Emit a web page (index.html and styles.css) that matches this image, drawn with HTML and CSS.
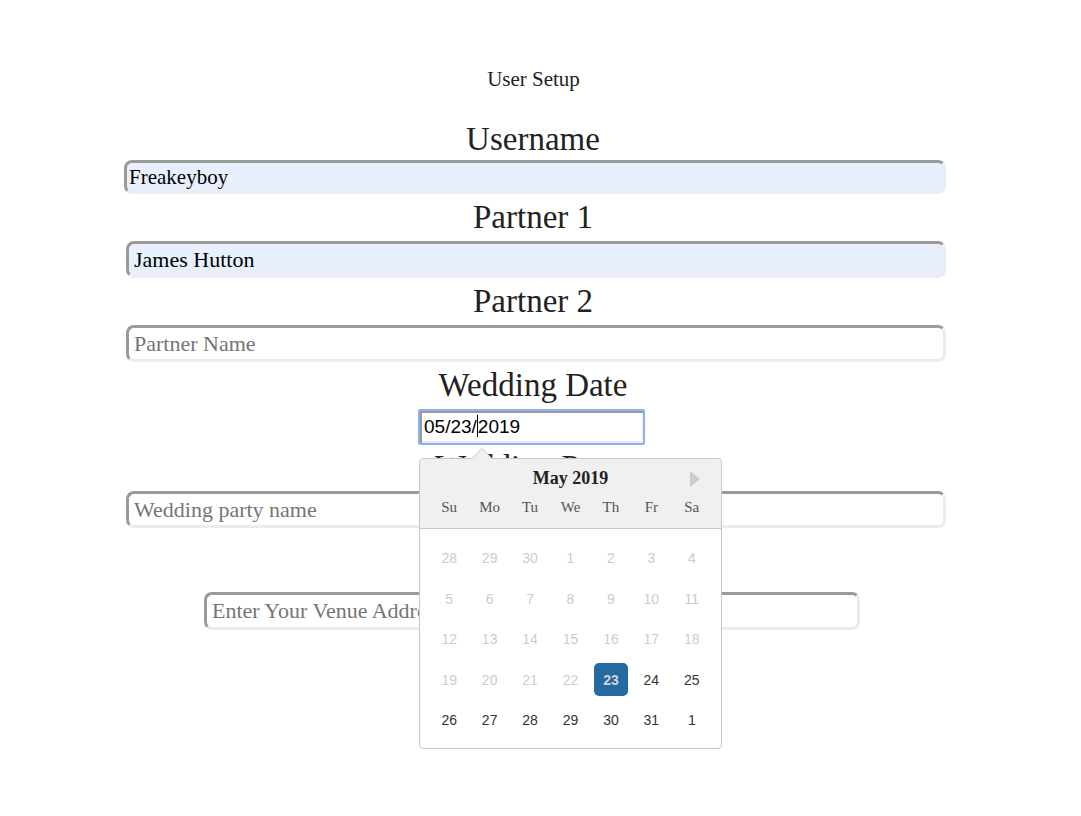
FILE: index.html
```html
<!DOCTYPE html>
<html lang="en">
<head>
<meta charset="utf-8">
<title>User Setup</title>
<link rel="stylesheet" href="styles.css">
</head>
<body>
<main class="setup">
  <h1 class="title">User Setup</h1>
  <form class="form">
    <label class="label label-first" for="username">Username</label>
    <input class="field field-user field-filled" id="username" type="text" value="Freakeyboy">

    <label class="label" for="p1">Partner 1</label>
    <input class="field field-filled" id="p1" type="text" value="James Hutton">

    <label class="label" for="p2">Partner 2</label>
    <input class="field" id="p2" type="text" placeholder="Partner Name">

    <label class="label" for="date">Wedding Date</label>
    <div class="date-wrap">
      <div class="date-field" id="date" role="textbox">05/23/<span class="caret"></span>2019</div>
      <div class="picker">
        <div class="picker-arrow"></div>
        <div class="picker-head">
          <div class="picker-title">May 2019<span class="picker-next"></span></div>
          <div class="picker-dow">
            <span>Su</span><span>Mo</span><span>Tu</span><span>We</span><span>Th</span><span>Fr</span><span>Sa</span>
          </div>
        </div>
        <div class="picker-days">
          <span class="off">28</span><span class="off">29</span><span class="off">30</span><span class="off">1</span><span class="off">2</span><span class="off">3</span><span class="off">4</span>
          <span class="off">5</span><span class="off">6</span><span class="off">7</span><span class="off">8</span><span class="off">9</span><span class="off">10</span><span class="off">11</span>
          <span class="off">12</span><span class="off">13</span><span class="off">14</span><span class="off">15</span><span class="off">16</span><span class="off">17</span><span class="off">18</span>
          <span class="off">19</span><span class="off">20</span><span class="off">21</span><span class="off">22</span><span class="sel"><b>23</b></span><span>24</span><span>25</span>
          <span>26</span><span>27</span><span>28</span><span>29</span><span>30</span><span>31</span><span>1</span>
        </div>
      </div>
    </div>

    <label class="label label-hidden" for="party">Wedding Party</label>
    <input class="field" id="party" type="text" placeholder="Wedding party name">

    <input class="field field-venue" id="venue" type="text" placeholder="Enter Your Venue Address">
  </form>
</main>
</body>
</html>
```

FILE: styles.css
```css
* { box-sizing: border-box; }

html, body {
  margin: 0;
  background: #ffffff;
}

body {
  font-family: "Liberation Serif", "Times New Roman", serif;
  color: #222222;
}

.setup {
  padding-top: 67px;
  padding-bottom: 170px;
  min-height: 816px;
}

.title {
  margin: 0;
  font-size: 21px;
  font-weight: normal;
  line-height: 24px;
  text-align: center;
  padding-right: 14px;
}

.form {
  width: 822px;
  margin: 0 0 0 124px;
  display: flex;
  flex-direction: column;
}

.label {
  display: block;
  font-size: 33px;
  line-height: 38px;
  margin: 4px 0 5px;
  text-align: center;
  padding-right: 4px;
}

.label-first {
  margin: 29px 0 2px;
}

.label-hidden {
  position: relative;
  z-index: 1;
  margin-top: 3px;
}

.field {
  display: block;
  font-family: "Liberation Serif", "Times New Roman", serif;
  font-size: 22px;
  line-height: 25px;
  color: #000000;
  background: #ffffff;
  border-style: solid;
  border-width: 3px 3px 3px 3px;
  border-color: #9a9a9a #ececec #ececec #9a9a9a;
  border-radius: 8px;
  padding: 3px 5px;
  margin-left: 2px;
  width: 820px;
  height: 37px;
  outline: none;
}

.field::placeholder {
  color: #757575;
}

.field-filled {
  background: #e8f0fe;
}

.field-user {
  margin-left: 0;
  width: 822px;
  height: 34px;
  font-size: 21px;
  padding: 1px 2px;
}

.date-wrap {
  position: relative;
  margin-left: 294px;
  width: 227px;
  z-index: 5;
}

.date-field {
  height: 36px;
  width: 227px;
  border: 2px solid #8cb2f5;
  border-radius: 2px;
  box-shadow: inset 2px 2px 0 #9a9a9a, inset -1px -2px 0 #ececec;
  font-family: "Liberation Sans", Arial, sans-serif;
  font-size: 19px;
  line-height: 32px;
  padding: 0 4px;
  color: #000000;
  background: #ffffff;
}

.caret {
  display: inline-block;
  width: 1px;
  height: 22px;
  background: #000000;
  vertical-align: -4px;
}

.picker {
  position: absolute;
  top: 49px;
  left: 1px;
  width: 303px;
  height: 291px;
  background: #ffffff;
  border: 1px solid #c8c8c8;
  border-radius: 4px;
  z-index: 5;
}

.picker-arrow {
  position: absolute;
  top: -11px;
  left: 51px;
  width: 0;
  height: 0;
  border-left: 11px solid transparent;
  border-right: 11px solid transparent;
  border-bottom: 11px solid #c8c8c8;
}

.picker-arrow::after {
  content: "";
  position: absolute;
  top: 1px;
  left: -10px;
  border-left: 10px solid transparent;
  border-right: 10px solid transparent;
  border-bottom: 10px solid #f0f0f0;
}

.picker-head {
  background: #f0f0f0;
  border-bottom: 1px solid #c8c8c8;
  border-radius: 4px 4px 0 0;
  height: 70px;
  padding: 0 9px;
}

.picker-title {
  position: relative;
  font-weight: bold;
  font-size: 18px;
  line-height: 20px;
  text-align: center;
  padding-top: 9px;
}

.picker-next {
  position: absolute;
  right: 12px;
  top: 12px;
  width: 0;
  height: 0;
  border-top: 8px solid transparent;
  border-bottom: 8px solid transparent;
  border-left: 10px solid #cccccc;
}

.picker-dow {
  display: grid;
  grid-template-columns: repeat(7, 1fr);
  margin-top: 10px;
  font-size: 15px;
  line-height: 18px;
  color: #555555;
  text-align: center;
}

.picker-days {
  display: grid;
  grid-template-columns: repeat(7, 1fr);
  grid-auto-rows: 40.5px;
  padding: 9px 9px 0;
  font-family: "Liberation Sans", Arial, sans-serif;
  font-size: 14px;
  color: #333333;
}

.picker-days span {
  display: flex;
  align-items: center;
  justify-content: center;
}

.picker-days .off {
  color: #cccccc;
}

.picker-days .sel b {
  display: flex;
  align-items: center;
  justify-content: center;
  width: 34px;
  height: 33px;
  background: #246aa3;
  border-radius: 5px;
  color: #d4d4d4;
  font-weight: bold;
}

.field-venue {
  margin-top: 64px;
  margin-left: 80px;
  width: 656px;
  height: 38px;
  padding: 3px 5px;
}
```
